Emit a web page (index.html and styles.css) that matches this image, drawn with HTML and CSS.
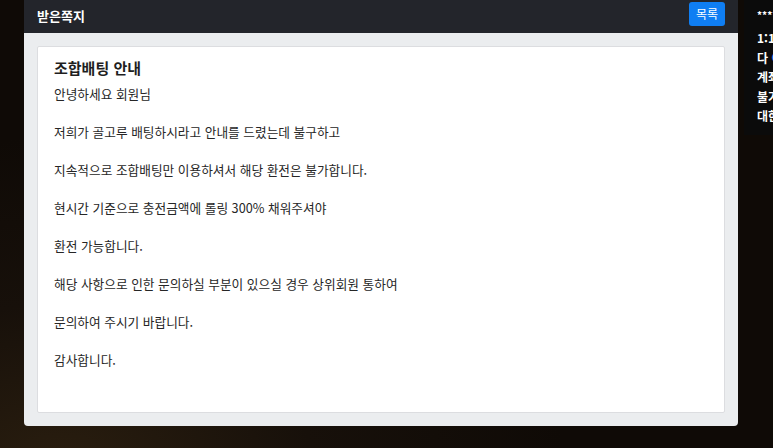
FILE: index.html
```html
<!DOCTYPE html>
<html lang="ko">
<head>
    <meta charset="utf-8">
    <title>받은쪽지</title>
    <meta name="viewport" content="width=device-width,initial-scale=1"/>
    <link rel="stylesheet" href="styles.css">
</head>
<body>
<div id="page">
    <div id="msgbox">
        <div id="msg_head">
            <span id="msg_title">받은쪽지</span>
            <a id="btn_list" href="#">목록</a>
        </div>
        <div id="msg_body">
            <div id="msg_card">
                <h4 id="card_title">조합배팅 안내</h4>
                <div id="card_text">
                    안녕하세요 회원님<br/><br/>
                    저희가 골고루 배팅하시라고 안내를 드렸는데 불구하고<br/><br/>
                    지속적으로 조합배팅만 이용하셔서 해당 환전은 불가합니다.<br/><br/>
                    현시간 기준으로 충전금액에 롤링 300% 채워주셔야<br/><br/>
                    환전 가능합니다.<br/><br/>
                    해당 사항으로 인한 문의하실 부분이 있으실 경우 상위회원 통하여<br/><br/>
                    문의하여 주시기 바랍니다.<br/><br/>
                    감사합니다.
                </div>
            </div>
        </div>
    </div>
    <div id="notice">
        <div class="stars">***********</div>
        1:1 문의 바랍니다<br/>
        다 <span class="blue">●</span> 안내드립니다<br/>
        계좌 문의는 필수<br/>
        불가 처리됩니다<br/>
        대한 안내입니다
    </div>
</div>
</body>
</html>
```
FILE: styles.css
```css
html, body{
    margin: 0;
    height: 100%;
}
body{
    background-color: #0f0a06;
    background-image: radial-gradient(ellipse at 8% 105%, #2a1e0f 0%, #17100a 25%, rgba(15,10,6,0) 50%);
    font-family: "Noto Sans CJK KR", "Noto Sans", sans-serif;
    overflow: hidden;
}
#page{
    display: flex;
    align-items: flex-start;
    padding-left: 24px;
}
#msgbox{
    width: 714px;
    height: 426px;
    display: flex;
    flex-direction: column;
    background-color: #ebedef;
    border-radius: 0 0 4px 4px;
    flex-shrink: 0;
}
#msg_head{
    height: 33px;
    background-color: #23252b;
    display: flex;
    align-items: center;
    justify-content: space-between;
    padding: 0 13px;
}
#msg_title{
    color: #fff;
    font-size: 13px;
    font-weight: bold;
    margin-top: -2px;
}
#btn_list{
    background-color: #0f7ef3;
    color: #fff;
    font-size: 12px;
    text-decoration: none;
    width: 36px;
    height: 24px;
    line-height: 23px;
    text-align: center;
    border-radius: 3px;
    margin-top: -5px;
}
#msg_body{
    flex: 1;
    padding: 13px;
    display: flex;
}
#msg_card{
    flex: 1;
    background-color: #fff;
    border: 1px solid #dcdde0;
    border-radius: 2px;
    padding: 9px 17px 9px 16px;
    color: #262626;
}
#card_title{
    margin: 0 0 4px 0;
    font-size: 15px;
    line-height: 24px;
    font-weight: bold;
    color: #1f1f1f;
}
#card_text{
    font-size: 12.7px;
    line-height: 19px;
}
#notice{
    margin-left: 6px;
    width: 60px;
    height: 127px;
    flex-shrink: 0;
    background-color: #0b0b0b;
    color: #fff;
    font-size: 12px;
    font-weight: bold;
    line-height: 19.5px;
    padding: 6px 0 2px 13px;
    white-space: nowrap;
    overflow: hidden;
}
.stars{
    font-size: 10px;
    line-height: 18px;
    margin-bottom: 4px;
}
.blue{
    color: #2a7de1;
}
```
